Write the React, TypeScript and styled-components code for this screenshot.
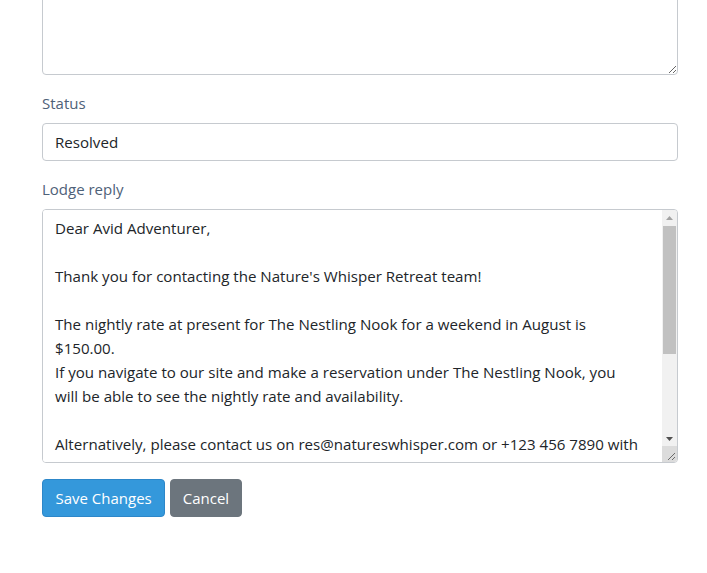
import React from "react";
import styled, { createGlobalStyle } from "styled-components";

const Global = createGlobalStyle`
  html, body { margin: 0; padding: 0; background: #fff; overflow: hidden; }
  body { font-family: "Open Sans", "Noto Sans", sans-serif; color: #212529; }
  * { box-sizing: border-box; }
`;

const Page = styled.div`
  width: 636px;
  margin: -60px 0 0 42px;
`;

const Group = styled.div`
  display: flex;
  flex-direction: column;
  margin-bottom: 16px;
`;

const Label = styled.label`
  font-size: 15px;
  line-height: 24px;
  color: #4e6178;
  margin-bottom: 8px;
`;

const fieldText = `
  font-family: "Open Sans", "Noto Sans", sans-serif;
  font-size: 15.1px;
  line-height: 24px;
  color: #212529;
`;

const Input = styled.input`
  ${fieldText}
  width: 100%;
  height: 38px;
  background: #fff;
  border: 1px solid #c6cacf;
  border-radius: 4px;
  padding: 6px 12px;
  outline: none;
`;

const TextArea = styled.textarea<{ $h: number }>`
  ${fieldText}
  display: block;
  width: 100%;
  height: ${(p) => p.$h}px;
  background: #fff;
  border: 1px solid #c6cacf;
  border-radius: 4px;
  padding: 6px 12px;
  outline: none;
  resize: vertical;
`;

const ReplyBox = styled.div`
  display: flex;
  height: 254px;
  border: 1px solid #c6cacf;
  border-radius: 4px;
  overflow: hidden;
  background: #fff;
`;

const ReplyText = styled.textarea`
  ${fieldText}
  flex: 1;
  min-width: 0;
  border: none;
  outline: none;
  resize: none;
  overflow: hidden;
  padding: 6px 20px 6px 12px;
  background: #fff;
`;

const Scrollbar = styled.div`
  width: 15px;
  flex: none;
  display: flex;
  flex-direction: column;
  background: #f1f1f1;
`;

const ScrollButton = styled.div`
  height: 15px;
  flex: none;
  display: flex;
  align-items: center;
  justify-content: center;
`;

const ScrollTrack = styled.div`
  flex: 1;
  display: flex;
  flex-direction: column;
`;

const Thumb = styled.div`
  height: 128px;
  margin: 1px 1px 0 1px;
  background: #c1c1c1;
`;

const ScrollCorner = styled.div`
  height: 16px;
  flex: none;
  background: #dcdcdc;
  display: flex;
  align-items: flex-end;
  justify-content: flex-end;
`;

const Actions = styled.div`
  display: flex;
  gap: 5px;
`;

const Button = styled.button<{ $variant: "primary" | "secondary" }>`
  font-family: "Open Sans", "Noto Sans", sans-serif;
  font-size: 15px;
  line-height: 24px;
  padding: 6px ${(p) => (p.$variant === "primary" ? "12.5px" : "11.5px")};
  height: 38px;
  border-radius: 4px;
  color: #fff;
  cursor: pointer;
  background: ${(p) => (p.$variant === "primary" ? "#3498db" : "#6c757d")};
  border: 1px solid ${(p) => (p.$variant === "primary" ? "#2d87c9" : "#6c757d")};
`;

const reply = `Dear Avid Adventurer,

Thank you for contacting the Nature's Whisper Retreat team!

The nightly rate at present for The Nestling Nook for a weekend in August is $150.00.
If you navigate to our site and make a reservation under The Nestling Nook, you will be able to see the nightly rate and availability.

Alternatively, please contact us on res@natureswhisper.com or +123 456 7890 with any further questions.

Kind regards,
Nature's Whisper Retreat`;

const Arrow = ({ up, color }: { up?: boolean; color: string }) => (
  <svg width="7" height="4" viewBox="0 0 7 4">
    <path d={up ? "M3.5 0 L7 4 L0 4 Z" : "M0 0 L7 0 L3.5 4 Z"} fill={color} />
  </svg>
);

const Grip = () => (
  <svg width="15" height="15" viewBox="0 0 15 15">
    <path d="M13 6 L6 13 M13 10 L10 13" stroke="#6b6b6b" strokeWidth="1" />
  </svg>
);

export default function App() {
  return (
    <>
      <Global />
      <Page>
        <Group>
          <TextArea $h={135} defaultValue="" />
        </Group>
        <Group>
          <Label>Status</Label>
          <Input defaultValue="Resolved" />
        </Group>
        <Group>
          <Label>Lodge reply</Label>
          <ReplyBox>
            <ReplyText defaultValue={reply} />
            <Scrollbar>
              <ScrollButton>
                <Arrow up color="#a3a3a3" />
              </ScrollButton>
              <ScrollTrack>
                <Thumb />
              </ScrollTrack>
              <ScrollButton>
                <Arrow color="#505050" />
              </ScrollButton>
              <ScrollCorner>
                <Grip />
              </ScrollCorner>
            </Scrollbar>
          </ReplyBox>
        </Group>
        <Actions>
          <Button $variant="primary">Save Changes</Button>
          <Button $variant="secondary">Cancel</Button>
        </Actions>
      </Page>
    </>
  );
}
